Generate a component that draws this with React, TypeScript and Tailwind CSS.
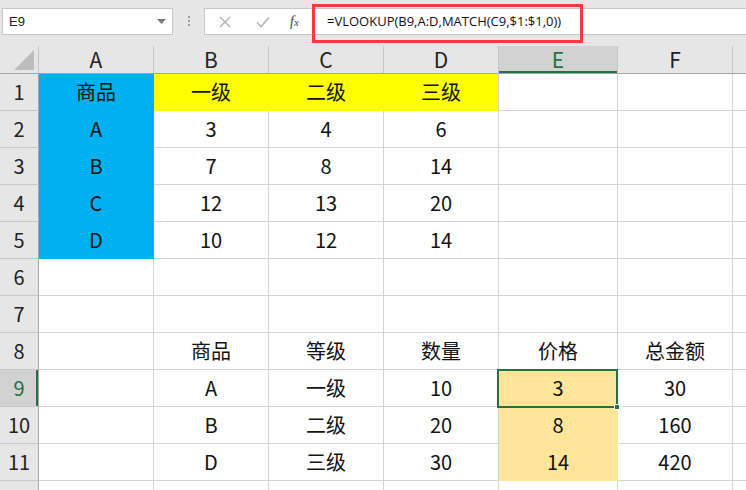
import React from "react";

const cols = ["A", "B", "C", "D", "E", "F"];
const widths = ["w-[115px]", "w-[115px]", "w-[115px]", "w-[115px]", "w-[119px]", "w-[115px]"];

type Fill = "blue" | "yellow" | "tan" | null;

const rows: { n: number; cells: string[]; fills: Fill[] }[] = [
  { n: 1, cells: ["商品", "一级", "二级", "三级", "", ""], fills: ["blue", "yellow", "yellow", "yellow", null, null] },
  { n: 2, cells: ["A", "3", "4", "6", "", ""], fills: ["blue", null, null, null, null, null] },
  { n: 3, cells: ["B", "7", "8", "14", "", ""], fills: ["blue", null, null, null, null, null] },
  { n: 4, cells: ["C", "12", "13", "20", "", ""], fills: ["blue", null, null, null, null, null] },
  { n: 5, cells: ["D", "10", "12", "14", "", ""], fills: ["blue", null, null, null, null, null] },
  { n: 6, cells: ["", "", "", "", "", ""], fills: [null, null, null, null, null, null] },
  { n: 7, cells: ["", "", "", "", "", ""], fills: [null, null, null, null, null, null] },
  { n: 8, cells: ["", "商品", "等级", "数量", "价格", "总金额"], fills: [null, null, null, null, null, null] },
  { n: 9, cells: ["", "A", "一级", "10", "3", "30"], fills: [null, null, null, null, "tan", null] },
  { n: 10, cells: ["", "B", "二级", "20", "8", "160"], fills: [null, null, null, null, "tan", null] },
  { n: 11, cells: ["", "D", "三级", "30", "14", "420"], fills: [null, null, null, null, "tan", null] },
  { n: 12, cells: ["", "", "", "", "", ""], fills: [null, null, null, null, null, null] },
];

function fillClass(f: Fill, rowIdx: number, colIdx: number) {
  const below = rows[rowIdx + 1]?.fills[colIdx];
  const right = rows[rowIdx].fills[colIdx + 1];
  const base =
    f === "blue" ? "bg-[#00b0f0]" : f === "yellow" ? "bg-[#ffff00]" : f === "tan" ? "bg-[#ffe699]" : "bg-white";
  const rb = f && right === f
    ? f === "blue" ? "border-r-[#00b0f0]" : f === "yellow" ? "border-r-[#ffff00]" : "border-r-[#ffe699]"
    : f === "blue" ? "border-r-[#00b0f0]" : f === "tan" ? "border-r-[#ffe699]" : "border-r-[#d4d4d4]";
  const bb = f && below === f
    ? f === "blue" ? "border-b-[#00b0f0]" : f === "yellow" ? "border-b-[#ffff00]" : "border-b-[#ffe699]"
    : f === "yellow" ? "border-b-[#ffff00]" : f === "tan" ? "border-b-[#ffe699]" : f === "blue" ? "border-b-[#00b0f0]" : "border-b-[#d4d4d4]";
  return `${base} ${rb} ${bb}`;
}

export default function App() {
  return (
    <div className="relative h-[490px] w-[746px] overflow-hidden bg-[#e6e6e6] font-['Noto_Sans_CJK_SC','Noto_Sans',sans-serif] text-[#1a1a1a]">
      {/* formula bar */}
      <div className="flex h-[46px] items-start pt-[8px]">
        <div className="ml-[2px] flex h-[27px] w-[171px] items-center justify-between border border-[#c6c6c6] bg-white pl-[6px] pr-[6px] text-[13px] text-[#222]">
          <span className="font-['Liberation_Sans',sans-serif]">E9</span>
          <svg width="9" height="5" viewBox="0 0 9 5"><path d="M0 0h9L4.5 5z" fill="#777" /></svg>
        </div>
        <div className="flex w-[31px] flex-col items-center gap-[2px] pt-[8px]">
          <span className="h-[2px] w-[2px] bg-[#999]" />
          <span className="h-[2px] w-[2px] bg-[#999]" />
          <span className="h-[2px] w-[2px] bg-[#999]" />
        </div>
        <div className="flex h-[27px] flex-1 items-center border-y border-l border-[#c6c6c6] bg-white">
          <div className="flex w-[107px] items-center">
            <svg className="ml-[14px]" width="12" height="12" viewBox="0 0 12 12">
              <path d="M1 1l10 10M11 1L1 11" stroke="#b3b3b3" strokeWidth="1.4" />
            </svg>
            <svg className="ml-[25px]" width="14" height="12" viewBox="0 0 14 12">
              <path d="M1 6.5l4 4L13 1.5" stroke="#b3b3b3" strokeWidth="1.6" fill="none" />
            </svg>
            <span className="ml-[20px] font-['Liberation_Serif',serif] text-[14px] italic text-[#444]">
              f<span className="text-[11px]">x</span>
            </span>
          </div>
          <div className="flex h-full flex-1 items-center border-l border-[#d4d4d4] pl-[14px] font-['Open_Sans',sans-serif] text-[13px] text-[#111]">
            =VLOOKUP(B9,A:D,MATCH(C9,$1:$1,0))
          </div>
        </div>
      </div>

      {/* red annotation box */}
      <div className="absolute left-[312px] top-[4px] h-[39px] w-[271px] border-[3px] border-[#f23b3b]" />

      {/* column headers */}
      <div className="flex h-[28px] border-b border-[#a6a6a6]">
        <div className="relative w-[39px] border-r border-[#c6c6c6]">
          <svg className="absolute bottom-[3px] right-[4px]" width="20" height="20" viewBox="0 0 20 20">
            <path d="M20 0V20H0z" fill="#bdbdbd" />
          </svg>
        </div>
        {cols.map((c, i) => (
          <div
            key={c}
            className={`${widths[i]} flex items-center justify-center border-r border-[#c6c6c6] text-[21px] ${
              c === "E" ? "bg-[#d2d2d2] text-[#217346] shadow-[inset_0_-2px_0_#217346]" : "text-[#222]"
            }`}
          >
            {c}
          </div>
        ))}
        <div className="flex-1" />
      </div>

      {/* grid rows */}
      <div className="bg-white">
        {rows.map((r, ri) => (
          <div key={r.n} className="flex h-[37px]">
            <div
              className={`flex w-[39px] items-center justify-center border-b border-r border-b-[#c6c6c6] border-r-[#a6a6a6] text-[20px] ${
                r.n === 9 ? "bg-[#d2d2d2] text-[#217346] shadow-[inset_-2px_0_0_#217346]" : "bg-[#e6e6e6] text-[#222]"
              }`}
            >
              {r.n < 12 ? r.n : ""}
            </div>
            {r.cells.map((v, ci) => (
              <div
                key={ci}
                className={`${widths[ci]} flex items-center justify-center border-b border-r text-[20px] text-[#111] ${fillClass(
                  r.fills[ci],
                  ri,
                  ci
                )}`}
              >
                {v}
              </div>
            ))}
            <div className="flex-1 border-b border-[#d4d4d4] bg-white" />
          </div>
        ))}
      </div>

      {/* selected cell E9 */}
      <div className="absolute left-[497px] top-[369px] h-[39px] w-[121px] border-2 border-[#217346]" />
      <div className="absolute left-[614px] top-[404px] h-[6px] w-[6px] border border-white bg-[#217346]" />
    </div>
  );
}
